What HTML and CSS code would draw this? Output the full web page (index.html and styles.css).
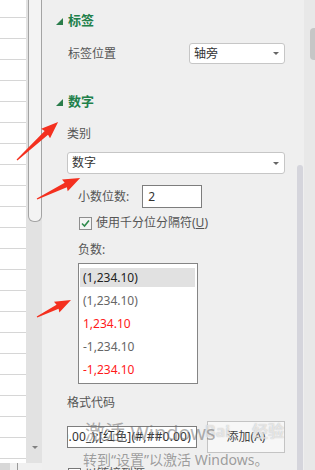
FILE: index.html
```html
<!DOCTYPE html>
<html>
<head>
    <meta charset="UTF-8">
    <title>设置坐标轴格式</title>
    <link rel="stylesheet" href="styles.css">
</head>
<body>
<div class="left">
    <div class="left-main">
        <div class="cells"></div>
        <div class="vscroll">
            <div class="vthumb"></div>
            <div class="vtrack"><span class="varrow"></span></div>
        </div>
    </div>
    <div class="left-foot"><span class="lf-a"></span><span class="lf-b"></span></div>
</div>
<div class="panel">
    <div class="content">
        <div class="sec-head">
            <svg class="tri" width="7" height="7" viewBox="0 0 7 7"><polygon points="7,0 7,7 0,7"/></svg>
            <span>标签</span>
        </div>
        <div class="row row-pos">
            <span class="lbl">标签位置</span>
            <div class="select sel-pos">
                <span>轴旁</span>
                <svg class="caret" width="6" height="3" viewBox="0 0 6 3"><polygon points="0,0 6,0 3,3"/></svg>
            </div>
        </div>
        <div class="sec-head sec-num">
            <svg class="tri" width="7" height="7" viewBox="0 0 7 7"><polygon points="7,0 7,7 0,7"/></svg>
            <span>数字</span>
        </div>
        <div class="lbl cat">类别</div>
        <div class="select sel-cat">
            <span>数字</span>
            <svg class="caret" width="6" height="3" viewBox="0 0 6 3"><polygon points="0,0 6,0 3,3"/></svg>
        </div>
        <div class="row row-dec">
            <span class="lbl">小数位数:</span>
            <div class="input dec">2</div>
        </div>
        <div class="row row-chk">
            <span class="chk">
                <svg width="11" height="11" viewBox="0 0 11 11"><polyline points="2,5.5 4.5,8 9,2.5"/></svg>
            </span>
            <span class="lbl">使用千分位分隔符(<u>U</u>)</span>
        </div>
        <div class="lbl neg">负数:</div>
        <div class="list">
            <div class="opt sel">(1,234.10)</div>
            <div class="opt gray">(1,234.10)</div>
            <div class="opt red">1,234.10</div>
            <div class="opt gray">-1,234.10</div>
            <div class="opt red">-1,234.10</div>
        </div>
        <div class="lbl fmt">格式代码</div>
        <div class="row row-fmt">
            <div class="input code"><span>#,##0.00_);[红色](#,##0.00)</span></div>
            <div class="btn">添加(A)</div>
        </div>
        <div class="row row-link">
            <span class="chk empty"></span>
            <span class="lbl">以链接到源</span>
        </div>
    </div>
    <div class="pscroll"><div class="pthumb"></div></div>
</div>
<div class="rstrip"><div class="rthumb"></div></div>

<!-- 红色标注箭头 -->
<svg class="arrows" width="315" height="470" viewBox="0 0 315 470">
    <polygon transform="translate(17 160) rotate(-42.8)" points="0,-0.6 40,-2.5 39,-6.5 56,0 39,6.5 40,2.5 0,0.6"/>
    <polygon transform="translate(37 199) rotate(-26)" points="0,-0.6 32,-2.5 31,-6.5 48,0 31,6.5 32,2.5 0,0.6"/>
    <polygon transform="translate(37 317) rotate(-26.6)" points="0,-0.6 23,-2.3 22,-6 38,0 22,6 23,2.3 0,0.6"/>
</svg>

<div class="wm-baidu">Bai<span>经验</span></div>
<div class="wm-big">激活 Windows</div>
<div class="wm-small">转到“设置”以激活 Windows。</div>
</body>
</html>
```

FILE: styles.css
```css
* {
    margin: 0;
    padding: 0;
    box-sizing: border-box;
}
body {
    width: 315px;
    height: 470px;
    overflow: hidden;
    display: flex;
    position: relative;
    background: #efefef;
    font-family: "Noto Sans", "Noto Sans CJK SC", sans-serif;
    font-size: 12px;
    line-height: 20px;
    color: #505050;
}

/* 左侧表格 */
.left {
    width: 42px;
    display: flex;
    flex-direction: column;
}
.left-main {
    flex: 1;
    display: flex;
}
.cells {
    width: 26px;
    background: repeating-linear-gradient(to bottom, #fff 0 20px, #d6d6d6 20px 21px);
    background-position: 0 -3px;
}
.vscroll {
    width: 16px;
    display: flex;
    flex-direction: column;
    background: #e2e2e2;
}
.vthumb {
    height: 222px;
    margin-left: 2px;
    background: #f3f3f3;
    border: 1px solid #a4a4a4;
    border-top: 0;
    border-radius: 0 0 6px 6px;
}
.vtrack {
    flex: 1;
    display: flex;
    justify-content: center;
    align-items: flex-end;
    padding: 0 0 14px 2px;
}
.varrow {
    width: 0;
    height: 0;
    border-left: 3px solid transparent;
    border-right: 3px solid transparent;
    border-top: 3px solid #808080;
}
.left-foot {
    height: 7px;
    display: flex;
    align-items: stretch;
    background: #f0f0f0;
}
.lf-a {
    width: 10px;
    background: #d8d8d8;
}
.lf-b {
    width: 1px;
    margin-left: 7px;
    background: #9a9a9a;
}

/* 设置面板 */
.panel {
    flex: 1;
    display: flex;
    background: #efefef;
}
.content {
    flex: 1;
    padding-left: 14px;
    padding-right: 11px;
}
.sec-head {
    height: 20px;
    margin-top: 10px;
    display: flex;
    align-items: center;
    gap: 5px;
    color: #21804a;
    font-size: 13px;
    font-weight: bold;
}
.sec-head .tri {
    fill: #2b7d4b;
    margin-top: 2px;
}
.sec-num {
    margin-top: 27px;
}
.lbl {
    color: #555;
}
.row {
    display: flex;
    align-items: center;
}
.row-pos {
    margin-top: 13px;
    height: 21px;
    padding-left: 12px;
    justify-content: space-between;
}
.select {
    display: flex;
    align-items: center;
    justify-content: space-between;
    height: 21px;
    padding: 0 5px 0 4px;
    background: #fff;
    border: 1px solid #c6c6c6;
    border-radius: 3px;
    color: #333;
}
.caret {
    fill: #666;
}
.sel-pos {
    width: 96px;
}
.cat {
    margin-top: 13px;
    padding-left: 11px;
}
.sel-cat {
    margin: 8px 0 0 11px;
    height: 22px;
}
.input {
    background: #fff;
    border: 1px solid #7d7d7d;
    color: #333;
}
.row-dec {
    margin-top: 11px;
    height: 23px;
    padding-left: 22px;
}
.dec {
    width: 60px;
    height: 23px;
    margin-left: 13px;
    padding-left: 5px;
    line-height: 21px;
}
.row-chk {
    margin-top: 8px;
    height: 14px;
    padding-left: 23px;
    gap: 4px;
}
.chk {
    width: 13px;
    height: 13px;
    border: 1px solid #8e8e8e;
    background: #f4f4f4;
    display: flex;
    align-items: center;
    justify-content: center;
}
.chk polyline {
    fill: none;
    stroke: #2f8a4c;
    stroke-width: 1.6;
}
.neg {
    margin-top: 10px;
    padding-left: 22px;
}
.list {
    width: 120px;
    height: 121px;
    margin: 3px 0 0 22px;
    padding-top: 3px;
    background: #fff;
    border: 1px solid #858585;
}
.opt {
    height: 23px;
    line-height: 22px;
    margin: 0 2px 0 1px;
    padding-left: 3px;
}
.opt.sel {
    color: #222;
    background: linear-gradient(#e1e1e1, #e1e1e1) 0 1px / 100% 19px no-repeat;
}
.opt.gray {
    color: #666;
}
.opt.red {
    color: #ff1a1a;
}
.fmt {
    margin-top: 9px;
    padding-left: 11px;
}
.row-fmt {
    margin-top: 8px;
    height: 32px;
    padding-left: 11px;
    gap: 10px;
}
.code {
    width: 130px;
    height: 22px;
    overflow: hidden;
    white-space: nowrap;
    display: flex;
    justify-content: flex-end;
    padding-right: 5px;
    line-height: 20px;
    letter-spacing: 0.2px;
}
.btn {
    width: 78px;
    height: 32px;
    line-height: 30px;
    text-align: center;
    background: #f7f7f7;
    border: 1px solid #c4c4c4;
    color: #444;
}
.row-link {
    margin-top: 14px;
    height: 14px;
    padding-left: 12px;
    gap: 4px;
}
.chk.empty {
    background: #fff;
    border-color: #777;
}
.pscroll {
    width: 8px;
    padding: 165px 1px 0;
}
.pthumb {
    height: 310px;
    background: #d5d5dc;
    border-radius: 3px;
}
.rstrip {
    width: 12px;
    background: #e8e8e8;
    padding: 28px 0 0 6px;
}
.rthumb {
    height: 32px;
    background: #c6c6c6;
    border-radius: 4px 0 0 4px;
}

/* 标注与水印 */
.arrows {
    position: absolute;
    left: 0;
    top: 0;
    fill: #f4301f;
}
.wm-big {
    position: absolute;
    left: 85px;
    top: 420px;
    font-size: 20px;
    line-height: 26px;
    color: rgba(110, 110, 110, 0.55);
    white-space: nowrap;
}
.wm-small {
    position: absolute;
    left: 83px;
    top: 451px;
    font-size: 14px;
    line-height: 18px;
    color: rgba(110, 110, 110, 0.65);
    white-space: nowrap;
}
.wm-baidu {
    position: absolute;
    left: 205px;
    top: 419px;
    font-size: 16px;
    font-weight: bold;
    line-height: 24px;
    color: rgba(255, 255, 255, 0.6);
    text-shadow: 0 0 1px rgba(120, 120, 120, 0.5);
    white-space: nowrap;
}
.wm-baidu span {
    margin-left: 22px;
}
```
